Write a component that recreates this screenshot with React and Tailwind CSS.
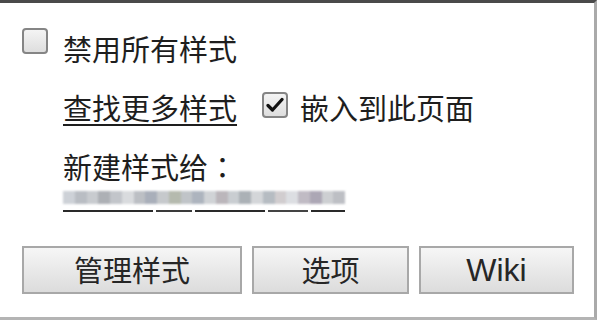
import React from "react";

const blur = [
  "#cdd1d7", "#b9bdc3", "#c8cbcf", "#adb0b5", "#c2c5ca", "#d9dbde", "#bcbfc4", "#a9afba",
  "#c6c9cc", "#b5baae", "#c0c4c8", "#adb4be", "#d0d3d6", "#bbb6bb", "#c9cdd1", "#abb1b6",
  "#d4d6d9", "#b6bcc2", "#d1cdcf", "#dcdee2", "#c0bbc4", "#aca7b5", "#cdcfd2", "#bdbfc4",
];

function CheckBox({ checked }) {
  return (
    <div className="w-[26px] h-[26px] shrink-0 rounded-[4px] border-2 border-[#858585] bg-gradient-to-b from-[#f4f4f4] to-[#dedede] flex items-center justify-center">
      {checked && (
        <svg width="18" height="16" viewBox="0 0 18 16">
          <path d="M2 8.5 L6.5 13 L16 2.5" fill="none" stroke="#111" strokeWidth="3.2" strokeLinecap="round" strokeLinejoin="round" />
        </svg>
      )}
    </div>
  );
}

function Btn({ w, children, latin }) {
  return (
    <div
      className={`${w} h-[48px] border-2 border-[#a8a8a8] bg-gradient-to-b from-[#f6f6f6] to-[#dcdcdc] flex items-center justify-center text-[#262626] ${latin ? "text-[32px]" : "text-[29px]"}`}
    >
      {children}
    </div>
  );
}

export default function App() {
  return (
    <div
      className="w-[600px] h-[324px] bg-white overflow-hidden"
      style={{ fontFamily: '"Noto Sans CJK SC", "Noto Sans", sans-serif' }}
    >
      <div className="w-[597px] h-[320px] border-t-[3px] border-t-[#4a4a4a] border-r-[3px] border-r-[#aaaaaa] border-b-[3px] border-b-[#b4b4b4] pl-[22px] pt-[25px] text-[#1e1e1e]">
        <div className="flex items-start">
          <CheckBox />
          <span className="ml-[15px] mt-[6px] text-[29px] leading-[29px]">禁用所有样式</span>
        </div>

        <div className="flex items-start ml-[41px] mt-[30px]">
          <span className="text-[29px] leading-[29px] underline decoration-2 underline-offset-[4px]">查找更多样式</span>
          <div className="ml-[25px] -mt-[1px]">
            <CheckBox checked />
          </div>
          <span className="ml-[12px] text-[29px] leading-[29px]">嵌入到此页面</span>
        </div>

        <div className="ml-[41px] mt-[30px] text-[29px] leading-[29px]">
          新建样式给<span style={{ fontFamily: '"Noto Sans CJK TC", sans-serif' }}>：</span>
        </div>

        <div className="ml-[41px] mt-[10px] w-[282px]">
          <div className="flex h-[13px] blur-[1px]">
            {blur.map((c, i) => (
              <div key={i} className="h-full flex-1" style={{ backgroundColor: c }} />
            ))}
          </div>
          <div className="flex mt-[6px] h-[2px] gap-[3px] blur-[0.4px]">
            <div className="w-[90px] bg-[#2a2a2a]" />
            <div className="w-[36px] bg-[#3a3a3a]" />
            <div className="w-[70px] bg-[#2a2a2a]" />
            <div className="w-[40px] bg-[#444]" />
            <div className="flex-1 bg-[#2a2a2a]" />
          </div>
        </div>

        <div className="flex mt-[34px] gap-[10px]">
          <Btn w="w-[220px]">管理样式</Btn>
          <Btn w="w-[157px]">选项</Btn>
          <Btn w="w-[155px]" latin>
            <span style={{ fontFamily: '"Liberation Sans", Arial, sans-serif' }}>Wiki</span>
          </Btn>
        </div>
      </div>
    </div>
  );
}
